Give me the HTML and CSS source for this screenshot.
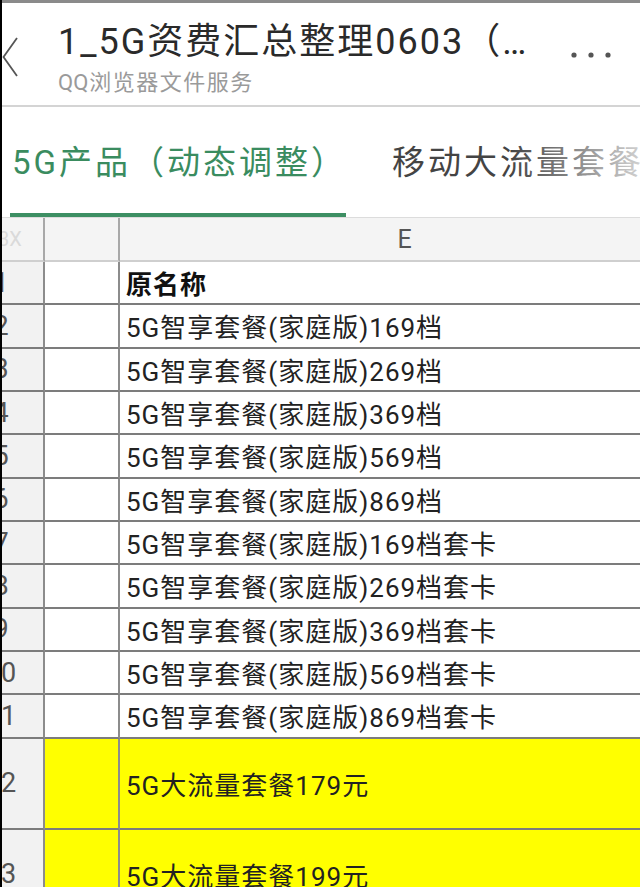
FILE: index.html
```html
<!DOCTYPE html>
<html lang="zh">
<head>
<meta charset="utf-8">
<title>1_5G资费汇总整理0603</title>
<link rel="stylesheet" href="styles.css">
</head>
<body>
<div class="screen">
  <div class="topline"></div>
  <header class="appbar">
    <svg class="back" width="16" height="40" viewBox="0 0 16 40"><polyline points="15,1 1.5,20 15,39" fill="none" stroke="#555" stroke-width="1.8"/></svg>
    <div class="titles">
      <div class="title">1_5G资费汇总整理0603（…</div>
      <div class="subtitle"><span class="latin">QQ</span>浏览器文件服务</div>
    </div>
    <svg class="more" width="42" height="8" viewBox="0 0 42 8"><circle cx="4" cy="4" r="2.6" fill="#555"/><circle cx="21" cy="4" r="2.6" fill="#555"/><circle cx="38" cy="4" r="2.6" fill="#555"/></svg>
  </header>
  <nav class="tabs">
    <div class="tab active">5G产品（动态调整）</div>
    <div class="tab">移动大流量套餐</div>
  </nav>
  <div class="sheet">
    <div class="row head">
      <div class="rh corner"><span>3X</span></div>
      <div class="cell d"></div>
      <div class="cell e colname">E</div>
    </div>
    <div class="row"><div class="rh"><span>1</span></div><div class="cell d"></div><div class="cell e bold">原名称</div></div>
    <div class="row"><div class="rh"><span>2</span></div><div class="cell d"></div><div class="cell e">5G智享套餐(家庭版)169档</div></div>
    <div class="row"><div class="rh"><span>3</span></div><div class="cell d"></div><div class="cell e">5G智享套餐(家庭版)269档</div></div>
    <div class="row"><div class="rh"><span>4</span></div><div class="cell d"></div><div class="cell e">5G智享套餐(家庭版)369档</div></div>
    <div class="row"><div class="rh"><span>5</span></div><div class="cell d"></div><div class="cell e">5G智享套餐(家庭版)569档</div></div>
    <div class="row"><div class="rh"><span>6</span></div><div class="cell d"></div><div class="cell e">5G智享套餐(家庭版)869档</div></div>
    <div class="row"><div class="rh"><span>7</span></div><div class="cell d"></div><div class="cell e">5G智享套餐(家庭版)169档套卡</div></div>
    <div class="row"><div class="rh"><span>8</span></div><div class="cell d"></div><div class="cell e">5G智享套餐(家庭版)269档套卡</div></div>
    <div class="row"><div class="rh"><span>9</span></div><div class="cell d"></div><div class="cell e">5G智享套餐(家庭版)369档套卡</div></div>
    <div class="row"><div class="rh"><span>10</span></div><div class="cell d"></div><div class="cell e">5G智享套餐(家庭版)569档套卡</div></div>
    <div class="row"><div class="rh"><span>11</span></div><div class="cell d"></div><div class="cell e">5G智享套餐(家庭版)869档套卡</div></div>
    <div class="row tall yellow"><div class="rh"><span>12</span></div><div class="cell d"></div><div class="cell e">5G大流量套餐179元</div></div>
    <div class="row tall yellow"><div class="rh"><span>13</span></div><div class="cell d"></div><div class="cell e">5G大流量套餐199元</div></div>
  </div>
</div>
</body>
</html>
```
FILE: styles.css
```css
html, body {
  margin: 0;
  padding: 0;
  background: #fff;
}
body {
  font-family: Roboto, "Noto Sans CJK SC", sans-serif;
}
.screen {
  width: 640px;
  height: 887px;
  overflow: hidden;
  border-left: 2px solid #000;
  box-sizing: border-box;
  position: relative;
  background: #fff;
}
.topline {
  height: 3px;
  background: #8a8a8a;
}
.appbar {
  height: 104px;
  box-sizing: border-box;
  border-bottom: 2px solid #d4d4d4;
  display: flex;
  align-items: flex-start;
}
.back {
  flex: none;
  margin-top: 34px;
}
.titles {
  margin-left: 40px;
  padding-top: 17px;
  flex: 1;
  min-width: 0;
}
.title {
  font-size: 36px;
  line-height: 44px;
  color: #2a2a2a;
  letter-spacing: 2px;
  white-space: nowrap;
}
.subtitle {
  font-size: 22px;
  line-height: 30px;
  color: #9a9a9a;
  letter-spacing: 1.5px;
  margin-top: 4px;
  white-space: nowrap;
}
.subtitle .latin {
  letter-spacing: 0;
  margin-right: 1px;
}
.more {
  flex: none;
  margin-top: 48px;
  margin-right: 28px;
}
.tabs {
  height: 111px;
  box-sizing: border-box;
  border-bottom: 1px solid #dcdcdc;
  display: flex;
  position: relative;
}
.tabs::after {
  content: "";
  position: absolute;
  right: 0;
  top: 0;
  bottom: 1px;
  width: 130px;
  background: linear-gradient(to right, rgba(255,255,255,0), rgba(255,255,255,0.75));
}
.tab {
  flex: none;
  display: flex;
  align-items: center;
  font-size: 33px;
  letter-spacing: 3px;
  color: #444;
  white-space: nowrap;
  box-sizing: border-box;
  height: 110px;
  padding-bottom: 4px;
}
.tab.active {
  margin-left: 8px;
  width: 336px;
  padding-left: 2px;
  color: #3a8c5f;
  border-bottom: 4px solid #3d8f63;
  padding-bottom: 0;
}
.tab + .tab {
  margin-left: 46px;
}
.sheet {
  display: flex;
  flex-direction: column;
}
.row {
  display: grid;
  grid-template-columns: 43px 75px 570px;
  height: 43.33px;
  box-sizing: border-box;
}
.row.head {
  height: 44px;
  background: #f4f4f4;
}
.row.tall {
  height: 91px;
}
.rh, .cell {
  box-sizing: border-box;
  border-bottom: 2px solid #7c7c7c;
  display: flex;
  align-items: center;
  min-width: 0;
}
.rh {
  background: #f2f2f2;
  border-right: 2px solid #8c8c8c;
  color: #555;
  font-size: 27px;
}
.rh span {
  flex: none;
  width: 86px;
  margin-left: -44px;
  text-align: center;
}
.cell.d {
  border-right: 2px solid #8c8c8c;
}
.cell.e {
  padding-left: 6px;
  font-size: 26px;
  letter-spacing: 1px;
  color: #222;
  white-space: nowrap;
}
.cell.bold {
  font-weight: bold;
  color: #111;
}
.row.head .rh, .row.head .cell {
  background: #f4f4f4;
  border-bottom-color: #cfcfcf;
}
.row.head .rh, .row.head .cell.d {
  border-right-color: #a8a8a8;
}
.corner span {
  font-size: 20px;
  color: #dadada;
  text-align: left;
  margin-left: -4px;
}
.colname {
  justify-content: center;
  padding-left: 0 !important;
  font-size: 25px !important;
  color: #555 !important;
}
.row.yellow .cell {
  background: #ffff00;
}
```
